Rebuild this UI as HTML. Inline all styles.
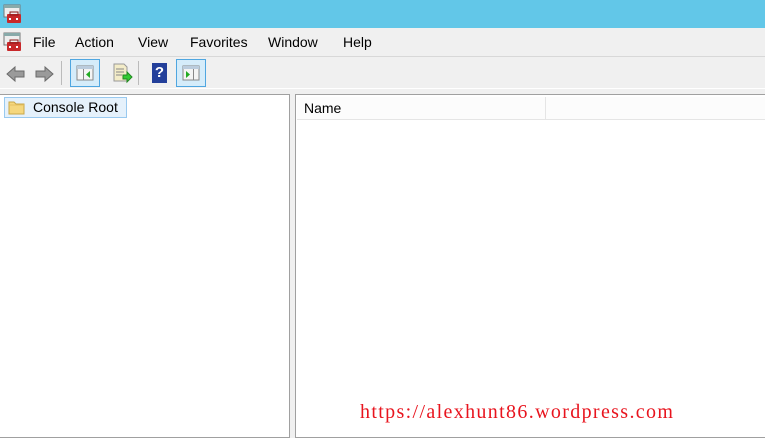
<!DOCTYPE html>
<html><head><style>
*{margin:0;padding:0;box-sizing:border-box}
body{width:765px;height:438px;overflow:hidden;background:#f0f0f0;font-family:"Liberation Sans",sans-serif;position:relative}
.abs{position:absolute}
.menu span{position:absolute;top:34px;font-size:14px;color:#000}
</style></head><body>
<div class="abs" style="left:0;top:0;width:765px;height:28px;background:#62c7e8"></div>
<svg class="abs" style="left:3px;top:4px" width="20" height="20" viewBox="0 0 20 20">
<rect x="1" y="1" width="16" height="12" fill="#eee" stroke="#777"/><rect x="1" y="1" width="16" height="3" fill="#8aa"/>
<rect x="4" y="10" width="14" height="9" rx="1" fill="#c8282a"/><rect x="7" y="8" width="8" height="3" fill="none" stroke="#8a1a1a"/>
<rect x="6" y="14" width="2" height="2" fill="#fff"/><rect x="13" y="14" width="2" height="2" fill="#fff"/></svg>
<div class="abs" style="left:0;top:28px;width:765px;height:29px;background:#f0f0f0;border-bottom:1px solid #d8d8d8"></div>
<svg class="abs" style="left:3px;top:32px" width="20" height="20" viewBox="0 0 20 20">
<rect x="1" y="1" width="16" height="12" fill="#eee" stroke="#777"/><rect x="1" y="1" width="16" height="3" fill="#8aa"/>
<rect x="4" y="10" width="14" height="9" rx="1" fill="#c8282a"/><rect x="7" y="8" width="8" height="3" fill="none" stroke="#8a1a1a"/>
<rect x="6" y="14" width="2" height="2" fill="#fff"/><rect x="13" y="14" width="2" height="2" fill="#fff"/></svg>
<div class="menu">
<span style="left:33px">File</span><span style="left:75px">Action</span><span style="left:138px">View</span><span style="left:190px">Favorites</span><span style="left:268px">Window</span><span style="left:343px">Help</span>
</div>
<svg class="abs" style="left:5px;top:64px" width="50" height="20" viewBox="0 0 50 20">
<path d="M2 10 L10 3 V7 H19 V13 H10 V17 Z" fill="#9a9a9a" stroke="#6a6a6a"/>
<path d="M48 10 L40 3 V7 H31 V13 H40 V17 Z" fill="#9a9a9a" stroke="#6a6a6a"/></svg>
<div class="abs" style="left:61px;top:61px;width:1px;height:24px;background:#bbb"></div>
<div class="abs" style="left:70px;top:59px;width:30px;height:28px;background:#d5ecfa;border:1px solid #4fa6e0"></div>
<svg class="abs" style="left:76px;top:64px" width="18" height="18" viewBox="0 0 18 18"><rect x="1" y="2" width="16" height="14" fill="#f4f4f4" stroke="#888"/><rect x="1" y="2" width="16" height="3" fill="#bcd"/><rect x="7" y="5" width="1" height="11" fill="#888"/><path d="M14 7 L10 10.5 L14 14Z" fill="#2a2"/></svg>
<svg class="abs" style="left:111px;top:62px" width="22" height="22" viewBox="0 0 22 22"><path d="M3 2 H13 L16 5 V19 H3Z" fill="#f3ecc8" stroke="#999"/><path d="M5 7h8M5 10h8M5 13h6" stroke="#888"/><path d="M12 13 h4 v-3 l5 5 l-5 5 v-3 h-4z" fill="#3c3" stroke="#282"/></svg>
<div class="abs" style="left:138px;top:61px;width:1px;height:24px;background:#bbb"></div>
<div class="abs" style="left:152px;top:63px;width:15px;height:20px;background:#233f9a;color:#fff;font-weight:bold;font-size:15px;text-align:center;line-height:20px">?</div>
<div class="abs" style="left:176px;top:59px;width:30px;height:28px;background:#d5ecfa;border:1px solid #4fa6e0"></div>
<svg class="abs" style="left:182px;top:64px" width="18" height="18" viewBox="0 0 18 18"><rect x="1" y="2" width="16" height="14" fill="#f4f4f4" stroke="#888"/><rect x="1" y="2" width="16" height="3" fill="#bcd"/><rect x="11" y="5" width="1" height="11" fill="#888"/><path d="M4 7 L8 10.5 L4 14Z" fill="#2a2"/></svg>
<div class="abs" style="left:0;top:88px;width:765px;height:1px;background:#fff"></div>
<div class="abs" style="left:0;top:94px;width:290px;height:344px;background:#fff;border:1px solid #a0a0a0;border-left:none"></div>
<div class="abs" style="left:4px;top:97px;width:123px;height:21px;background:#e5f1fb;border:1px solid #99c9ef"></div>
<svg class="abs" style="left:8px;top:99px" width="18" height="17" viewBox="0 0 18 17"><path d="M1 3 H6 L8 5 H16 V15 H1Z" fill="#f5d77e" stroke="#c9a84a"/><path d="M1 6 H16" stroke="#e6c262"/></svg>
<div class="abs" style="left:33px;top:99px;font-size:14px;color:#000">Console Root</div>
<div class="abs" style="left:295px;top:94px;width:470px;height:344px;background:#fff;border:1px solid #a0a0a0;border-right:none"></div>
<div class="abs" style="left:297px;top:97px;width:468px;height:23px;background:#fcfcfc;border-bottom:1px solid #e5e5e5"></div>
<div class="abs" style="left:545px;top:97px;width:1px;height:22px;background:#e5e5e5"></div>
<div class="abs" style="left:304px;top:100px;font-size:14px;color:#000">Name</div>
<div class="abs" style="left:360px;top:401px;font-family:'Liberation Serif',serif;font-size:20px;letter-spacing:1.35px;color:#e8141e;white-space:nowrap">https://alexhunt86.wordpress.com</div>
</body></html>
